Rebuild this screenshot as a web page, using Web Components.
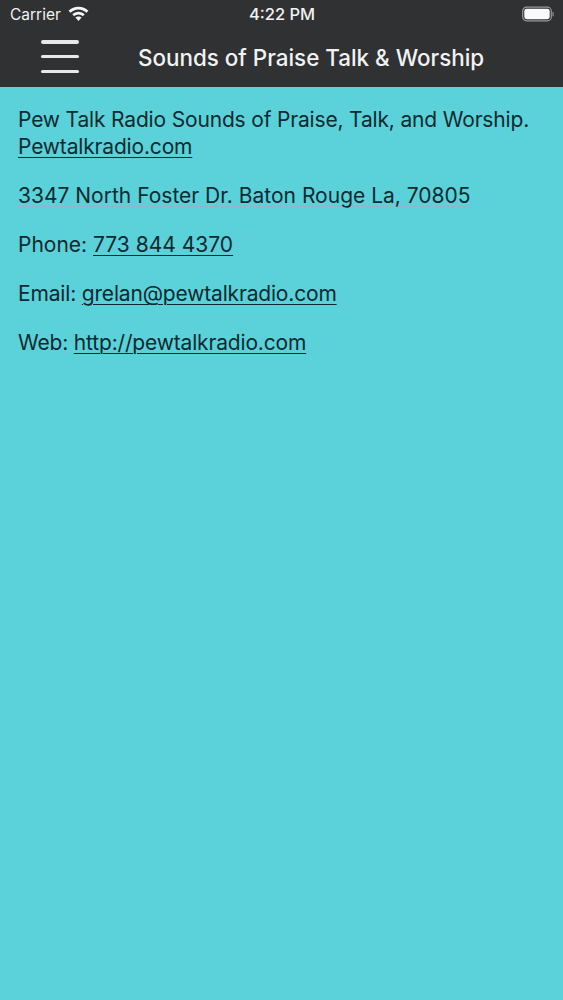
<!DOCTYPE html>
<html>
<head>
<meta charset="utf-8">
<title>Sounds of Praise Talk &amp; Worship</title>
<style>
  html, body { margin: 0; height: 100%; background: #5bd1da; }
  body { font-family: Inter, "Noto Sans", sans-serif; overflow: hidden; }
</style>
</head>
<body>
<app-header title="Sounds of Praise Talk &amp; Worship"></app-header>
<info-panel>
  <info-line tight>Pew Talk Radio Sounds of Praise, Talk, and Worship. <a href="#">Pewtalkradio.com</a></info-line>
  <info-line><span class="faint">3347 North Foster Dr. Baton Rouge La, 70805</span></info-line>
  <info-line>Phone: <a href="#">773 844 4370</a></info-line>
  <info-line tight>Email: <a href="#">grelan@pewtalkradio.com</a></info-line>
  <info-line tight>Web: <a href="#">http://pewtalkradio.com</a></info-line>
</info-panel>

<script>
class StatusBar extends HTMLElement {
  connectedCallback() {
    this.attachShadow({ mode: 'open' });
    this.shadowRoot.innerHTML = `
      <style>
        :host {
          display: grid;
          grid-template-columns: 1fr auto 1fr;
          align-items: center;
          height: 28px;
          padding: 0 9px 0 10px;
          color: #f2f2f2;
          font-size: 15.500px;
        }
        .left { display: flex; align-items: center; gap: 7px; }
        .time { font-size: 16.500px; font-weight: 500; }
        .right { display: flex; justify-content: flex-end; }
        svg { display: block; }
      </style>
      <div class="left">
        <span>Carrier</span>
        <svg width="21" height="16" viewBox="0 0 21 16">
          <path d="M10.5 .8C6.700 .8 3.200 2.300.6 4.800l1.900 2c2.100-2 4.900-3.300 8-3.300s5.900 1.300 8 3.300l1.900-2C17.800 2.300 14.300.8 10.500.8z" fill="#f5f5f5"/>
          <path d="M10.500 5.700c-2.400 0-4.600 1-6.200 2.500l1.900 2c1.100-1.100 2.600-1.800 4.300-1.800s3.200.7 4.300 1.800l1.900-2c-1.600-1.500-3.800-2.500-6.200-2.500z" fill="#f5f5f5"/>
          <path d="M10.500 10.400c-1.200 0-2.300.5-3.100 1.200l3.100 3.300 3.100-3.300c-.8-.7-1.900-1.200-3.100-1.200z" fill="#f5f5f5"/>
        </svg>
      </div>
      <span class="time">4:22 PM</span>
      <div class="right">
        <svg width="32" height="16" viewBox="0 0 32 16">
          <rect x="0.700" y="1.200" width="28.600" height="13.600" rx="3.800" fill="none" stroke="#9a9a9a" stroke-width="1.200"/>
          <rect x="2.300" y="2.800" width="25.400" height="10.400" rx="2.400" fill="#fafafa"/>
          <rect x="30.400" y="6" width="1.300" height="4.400" rx="0.600" fill="#8a8a8a"/>
        </svg>
      </div>
    `;
  }
}

class AppHeader extends HTMLElement {
  connectedCallback() {
    this.attachShadow({ mode: 'open' });
    this.shadowRoot.innerHTML = `
      <style>
        :host {
          display: block;
          background: #2f3133;
          height: 87px;
        }
        nav {
          display: flex;
          align-items: center;
          height: 59px;
          padding-left: 41px;
        }
        .menu {
          display: flex;
          flex-direction: column;
          gap: 11.300px;
          width: 38px;
          flex: none;
          margin-bottom: 1.500px;
        }
        .menu span {
          display: block;
          height: 3.400px;
          border-radius: 2px;
          background: #e8e8e8;
        }
        h1 {
          margin: 0 0 0 59px;
          color: #f2f2f2;
          font-size: 22.400px;
          font-weight: 500;
          white-space: nowrap;
        }
      </style>
      <status-bar></status-bar>
      <nav>
        <div class="menu"><span></span><span></span><span></span></div>
        <h1>${this.getAttribute('title').replace('&', '&amp;')}</h1>
      </nav>
    `;
  }
}

class InfoPanel extends HTMLElement {
  connectedCallback() {
    this.attachShadow({ mode: 'open' });
    this.shadowRoot.innerHTML = `
      <style>
        :host {
          display: flex;
          flex-direction: column;
          gap: 22px;
          padding: 19px 18px 0;
          color: #0c2b30;
          font-size: 21px;
          line-height: 27px;
        }
      </style>
      <slot></slot>
    `;
  }
}

class InfoLine extends HTMLElement {
  connectedCallback() {
    this.attachShadow({ mode: 'open' });
    this.shadowRoot.innerHTML = `
      <style>
        :host { display: block; }
        :host([tight]) { letter-spacing: -0.170px; }
        ::slotted(a) { color: inherit; text-decoration: underline; text-underline-offset: 2.500px; text-decoration-thickness: 1.200px; }
        ::slotted(.faint) { text-decoration: underline; text-decoration-color: #8fb9bf; text-decoration-thickness: 1px; text-underline-offset: 2.500px; }
      </style>
      <slot></slot>
    `;
  }
}

customElements.define('status-bar', StatusBar);
customElements.define('app-header', AppHeader);
customElements.define('info-panel', InfoPanel);
customElements.define('info-line', InfoLine);
</script>
</body>
</html>
